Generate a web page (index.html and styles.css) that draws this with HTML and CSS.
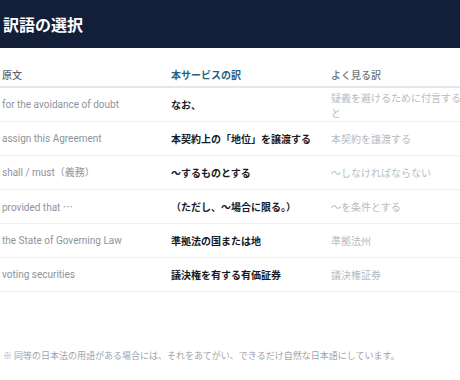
FILE: index.html
```html
<!DOCTYPE html>
<html lang="ja">
<head>
<meta charset="utf-8">
<link rel="stylesheet" href="styles.css">
</head>
<body>
<header class="bar"><h1 class="title">訳語の選択</h1></header>
<main class="content">
  <div class="table">
    <div class="row head">
      <div class="cell c1">原文</div>
      <div class="cell c2">本サービスの訳</div>
      <div class="cell c3">よく見る訳</div>
    </div>
    <div class="row">
      <div class="cell c1">for the avoidance of doubt</div>
      <div class="cell c2">なお、</div>
      <div class="cell c3">疑義を避けるために付言すると</div>
    </div>
    <div class="row">
      <div class="cell c1">assign this Agreement</div>
      <div class="cell c2">本契約上の「地位」を譲渡する</div>
      <div class="cell c3">本契約を譲渡する</div>
    </div>
    <div class="row">
      <div class="cell c1">shall / must（義務）</div>
      <div class="cell c2">〜するものとする</div>
      <div class="cell c3">〜しなければならない</div>
    </div>
    <div class="row">
      <div class="cell c1">provided that <span class="cjk">…</span></div>
      <div class="cell c2">（ただし、〜場合に限る。）</div>
      <div class="cell c3">〜を条件とする</div>
    </div>
    <div class="row">
      <div class="cell c1">the State of Governing Law</div>
      <div class="cell c2">準拠法の国または地</div>
      <div class="cell c3">準拠法州</div>
    </div>
    <div class="row">
      <div class="cell c1">voting securities</div>
      <div class="cell c2">議決権を有する有価証券</div>
      <div class="cell c3">議決権証券</div>
    </div>
  </div>
  <p class="note">※ 同等の日本法の用語がある場合には、それをあてがい、できるだけ自然な日本語にしています。</p>
</main>
</body>
</html>
```

FILE: styles.css
```css
html, body {
  margin: 0;
  padding: 0;
  overflow: hidden;
  background: #ffffff;
  font-family: "Noto Sans CJK JP", "Noto Sans", sans-serif;
}
.bar {
  height: 48px;
  background: #131f38;
  display: flex;
  align-items: center;
  padding-left: 3px;
}
.title {
  margin: 0;
  color: #ffffff;
  font-size: 16px;
  font-weight: 700;
  line-height: 20px;
}
.content {
  width: 470px;
  padding-top: 14px;
}
.table {
  display: flex;
  flex-direction: column;
}
.row {
  display: grid;
  grid-template-columns: 169px 160px 134px;
  padding-left: 2px;
  height: 33px;
  align-items: center;
  border-bottom: 1px solid #eef0f3;
  font-size: 10px;
  line-height: 15px;
}
.row.head {
  height: 24px;
  border-bottom: 2px solid #e4e7eb;
}
.cell { min-width: 0; }
.head .c1 { color: #5c6470; font-weight: 500; }
.head .c2 { color: #2b5f80; font-weight: 700; }
.head .c3 { color: #6f7680; font-weight: 500; }
.c1 { color: #8d939c; font-family: Roboto, "Noto Sans CJK JP", sans-serif; }
.head .c1 { font-family: "Noto Sans CJK JP", sans-serif; }
.cjk { font-family: "Noto Sans CJK JP", sans-serif; }
.c2 { color: #161b24; font-weight: 700; }
.c3 { color: #b7bbc1; }
.note {
  margin: 57px 0 0 3px;
  font-size: 9px;
  line-height: 14px;
  color: #9ea3aa;
}
```
